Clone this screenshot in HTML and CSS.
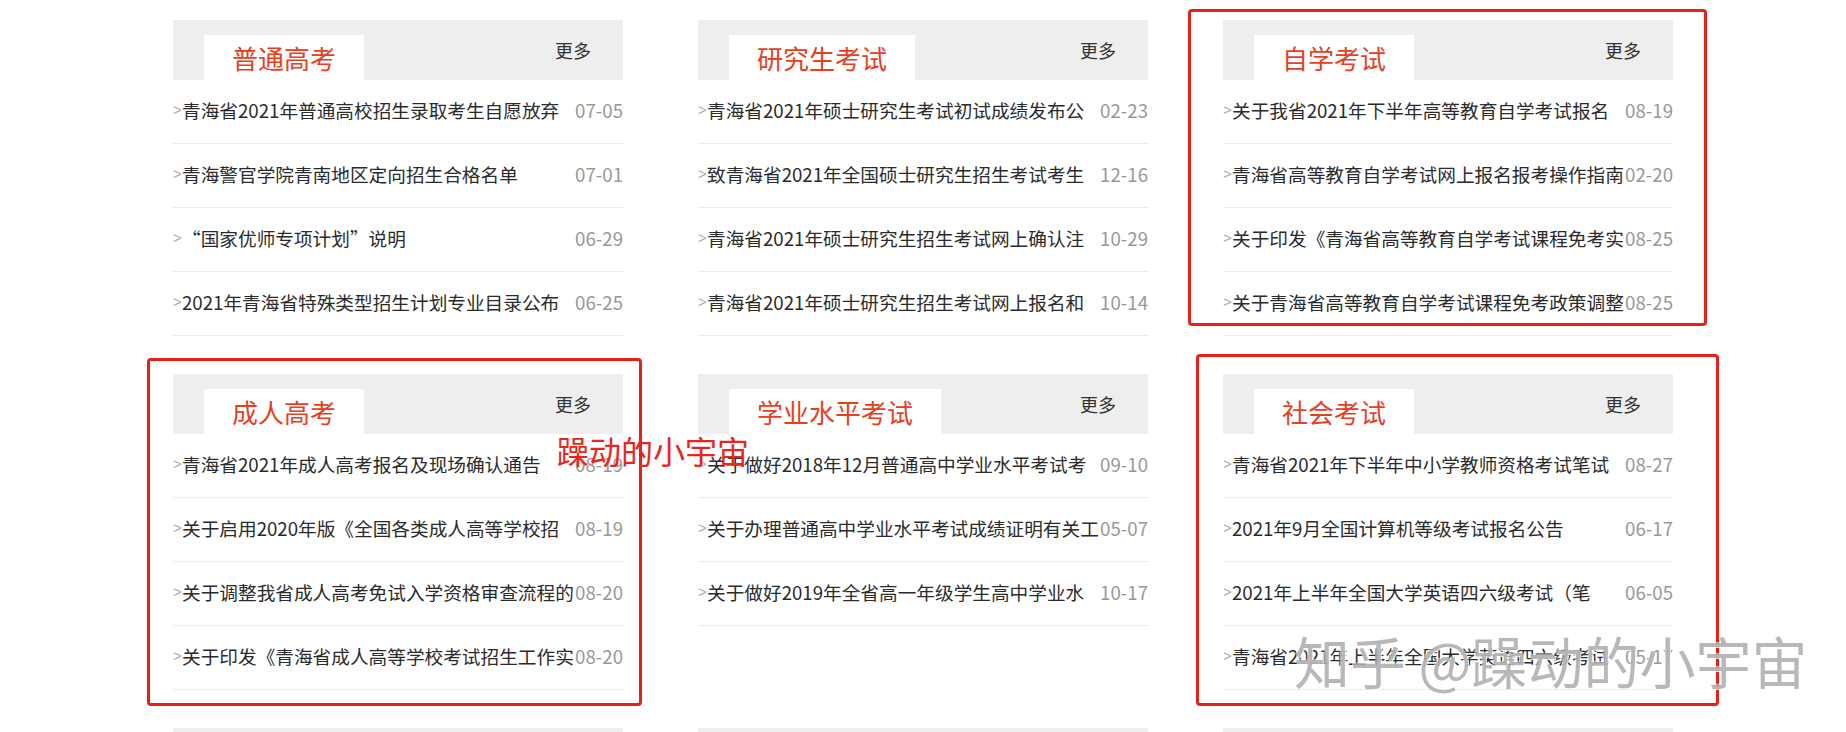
FILE: index.html
```html
<!DOCTYPE html>
<html lang="zh-CN">
<head>
<meta charset="UTF-8" />
<meta name="viewport" content="width=device-width, initial-scale=1" />
<title>考试信息</title>
<link rel="stylesheet" href="styles.css">
</head>
<body>

<div class="wrap">

  <div class="box">
    <div class="box-head"><h2>普通高考</h2><a class="more">更多</a></div>
    <ul class="list">
      <li><a>青海省2021年普通高校招生录取考生自愿放弃</a><span class="date">07-05</span></li>
      <li><a>青海警官学院青南地区定向招生合格名单</a><span class="date">07-01</span></li>
      <li><a>“国家优师专项计划”说明</a><span class="date">06-29</span></li>
      <li><a>2021年青海省特殊类型招生计划专业目录公布</a><span class="date">06-25</span></li>
    </ul>
  </div>

  <div class="box">
    <div class="box-head"><h2>研究生考试</h2><a class="more">更多</a></div>
    <ul class="list">
      <li><a>青海省2021年硕士研究生考试初试成绩发布公</a><span class="date">02-23</span></li>
      <li><a>致青海省2021年全国硕士研究生招生考试考生</a><span class="date">12-16</span></li>
      <li><a>青海省2021年硕士研究生招生考试网上确认注</a><span class="date">10-29</span></li>
      <li><a>青海省2021年硕士研究生招生考试网上报名和</a><span class="date">10-14</span></li>
    </ul>
  </div>

  <div class="box">
    <div class="box-head"><h2>自学考试</h2><a class="more">更多</a></div>
    <ul class="list">
      <li><a>关于我省2021年下半年高等教育自学考试报名</a><span class="date">08-19</span></li>
      <li><a>青海省高等教育自学考试网上报名报考操作指南</a><span class="date">02-20</span></li>
      <li><a>关于印发《青海省高等教育自学考试课程免考实</a><span class="date">08-25</span></li>
      <li><a>关于青海省高等教育自学考试课程免考政策调整</a><span class="date">08-25</span></li>
    </ul>
  </div>

  <div class="box">
    <div class="box-head"><h2>成人高考</h2><a class="more">更多</a></div>
    <ul class="list">
      <li><a>青海省2021年成人高考报名及现场确认通告</a><span class="date">08-19</span></li>
      <li><a>关于启用2020年版《全国各类成人高等学校招</a><span class="date">08-19</span></li>
      <li><a>关于调整我省成人高考免试入学资格审查流程的</a><span class="date">08-20</span></li>
      <li><a>关于印发《青海省成人高等学校考试招生工作实</a><span class="date">08-20</span></li>
    </ul>
  </div>

  <div class="box">
    <div class="box-head"><h2>学业水平考试</h2><a class="more">更多</a></div>
    <ul class="list">
      <li><a>关于做好2018年12月普通高中学业水平考试考</a><span class="date">09-10</span></li>
      <li><a>关于办理普通高中学业水平考试成绩证明有关工</a><span class="date">05-07</span></li>
      <li><a>关于做好2019年全省高一年级学生高中学业水</a><span class="date">10-17</span></li>
    </ul>
  </div>

  <div class="box">
    <div class="box-head"><h2>社会考试</h2><a class="more">更多</a></div>
    <ul class="list">
      <li><a>青海省2021年下半年中小学教师资格考试笔试</a><span class="date">08-27</span></li>
      <li><a>2021年9月全国计算机等级考试报名公告</a><span class="date">06-17</span></li>
      <li><a>2021年上半年全国大学英语四六级考试（笔</a><span class="date">06-05</span></li>
      <li><a>青海省2021年上半年全国大学英语四六级考试</a><span class="date">05-17</span></li>
    </ul>
  </div>

  <div class="box"><div class="box-head"></div></div>
  <div class="box"><div class="box-head"></div></div>
  <div class="box"><div class="box-head"></div></div>

</div>

<!-- screenshot annotations -->
<div class="mark mark-a"></div>
<div class="mark mark-b"></div>
<div class="mark mark-c"></div>
<div class="note">躁动的小宇宙</div>
<div class="watermark">知乎 @躁动的小宇宙</div>

</body>
</html>
```

FILE: styles.css
```css
body { margin: 0; position: relative; background: #fff; color: #333; font-family: "Noto Sans CJK SC", sans-serif; }
.wrap {
  width: 1500px; margin: 0 auto; padding-top: 20px;
  display: grid; grid-template-columns: repeat(3, 450px); column-gap: 75px; row-gap: 38px;
}
.box-head { height: 60px; background: #eee; display: flex; align-items: flex-end; justify-content: space-between; }
.box-head h2 {
  margin: 0 0 0 31px; padding: 0 28px; height: 45px; line-height: 45px; background: #fff;
  font-size: 26px; font-weight: normal; color: #e7401f;
}
.more { align-self: center; margin-right: 32px; font-size: 18px; color: #333; cursor: pointer; }
.list { list-style: none; margin: 0; padding: 0; }
.list li {
  height: 59px; padding-bottom: 4px; border-bottom: 1px solid #ececec;
  display: flex; align-items: center; font-size: 18.67px;
}
.list li::before { content: ">"; width: 9px; flex: none; color: #aaa; font: 15px "Liberation Sans", sans-serif; }
.list a { flex: 1; min-width: 0; white-space: nowrap; overflow: hidden; color: #2b2b2b; cursor: pointer; }
.list .date { flex: none; color: #999; }

/* Annotation overlays */
.mark { position: absolute; box-sizing: border-box; border: 3px solid #e62117; border-radius: 4px; }
.mark-a { left: 1188px; top: 9px; width: 519px; height: 317px; }
.mark-b { left: 147px; top: 358px; width: 495px; height: 348px; }
.mark-c { left: 1196px; top: 354px; width: 523px; height: 352px; }
.note { position: absolute; left: 557px; top: 434px; font-size: 32px; line-height: 1; color: #e8261c; }
.watermark {
  position: absolute; left: 1294px; top: 632px; font-size: 56px; line-height: 1;
  color: rgba(150, 150, 150, 0.68); text-shadow: 1px 1px 0 rgba(255, 255, 255, 0.8), -1px -1px 0 rgba(255, 255, 255, 0.5);
  white-space: nowrap;
}
```
